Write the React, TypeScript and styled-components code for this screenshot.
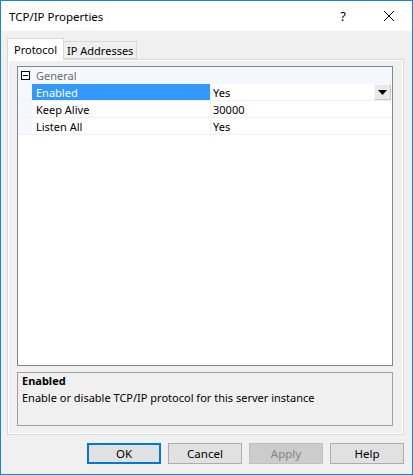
import React from "react";
import styled, { createGlobalStyle } from "styled-components";

const GlobalStyle = createGlobalStyle`
  html, body {
    margin: 0;
    padding: 0;
    background: #ffffff;
  }
  * {
    box-sizing: border-box;
  }
`;

const rows = [
  { name: "Enabled", value: "Yes", selected: true },
  { name: "Keep Alive", value: "30000", selected: false },
  { name: "Listen All", value: "Yes", selected: false },
];

const App: React.FC = () => {
  return (
    <>
      <GlobalStyle />
      <Window>
        <TitleBar>
          <Title>TCP/IP Properties</Title>
          <TitleButtons>
            <HelpGlyph>?</HelpGlyph>
            <CloseGlyph>
              <svg width="12" height="12" viewBox="0 0 12 12">
                <path d="M1 1 L11 11 M11 1 L1 11" stroke="#000" strokeWidth="1" fill="none" />
              </svg>
            </CloseGlyph>
          </TitleButtons>
        </TitleBar>

        <Body>
          <TabStrip>
            <Tab $active>Protocol</Tab>
            <Tab>IP Addresses</Tab>
          </TabStrip>

          <TabPanel>
            <Grid>
              <CategoryRow>
                <Margin>
                  <Expander />
                </Margin>
                <CategoryLabel>General</CategoryLabel>
              </CategoryRow>
              {rows.map((r) => (
                <PropRow key={r.name}>
                  <Margin />
                  <NameCell $selected={r.selected}>{r.name}</NameCell>
                  <ValueCell>
                    <span>{r.value}</span>
                    {r.selected && (
                      <DropButton>
                        <svg width="9" height="5" viewBox="0 0 9 5">
                          <path d="M0 0 H9 L4.5 5 Z" fill="#000" />
                        </svg>
                      </DropButton>
                    )}
                  </ValueCell>
                </PropRow>
              ))}
            </Grid>

            <Description>
              <DescTitle>Enabled</DescTitle>
              <DescText>Enable or disable TCP/IP protocol for this server instance</DescText>
            </Description>
          </TabPanel>

          <ButtonRow>
            <DialogButton $default>OK</DialogButton>
            <DialogButton>Cancel</DialogButton>
            <DialogButton disabled>Apply</DialogButton>
            <DialogButton>Help</DialogButton>
          </ButtonRow>
        </Body>
      </Window>
    </>
  );
};

const Window = styled.div`
  width: 413px;
  height: 475px;
  border: 1px solid #1883d7;
  background: #f0f0f0;
  display: flex;
  flex-direction: column;
  font-family: "Noto Sans", "Open Sans", sans-serif;
  font-size: 11px;
  color: #000;
`;

const TitleBar = styled.div`
  height: 30px;
  background: #ffffff;
  display: flex;
  align-items: center;
  justify-content: space-between;
  padding-left: 8px;
`;

const Title = styled.span`
  font-size: 11.5px;
  color: #000;
`;

const TitleButtons = styled.div`
  display: flex;
  align-items: center;
  height: 100%;
`;

const HelpGlyph = styled.span`
  width: 30px;
  text-align: center;
  font-size: 13px;
  margin-right: 8px;
`;

const CloseGlyph = styled.span`
  width: 46px;
  height: 100%;
  display: flex;
  align-items: center;
  justify-content: center;
`;

const Body = styled.div`
  flex: 1;
  display: flex;
  flex-direction: column;
  padding: 7px 8px 0 6px;
`;

const TabStrip = styled.div`
  display: flex;
  align-items: flex-end;
  height: 21px;
  position: relative;
  z-index: 1;
`;

const Tab = styled.div<{ $active?: boolean }>`
  height: ${(p) => (p.$active ? "22px" : "18px")};
  padding: 0 ${(p) => (p.$active ? "6px" : "3px")};
  margin-bottom: ${(p) => (p.$active ? "-1px" : "0")};
  border: 1px solid #d9d9d9;
  border-bottom: ${(p) => (p.$active ? "none" : "1px solid #d9d9d9")};
  border-left: ${(p) => (p.$active ? "1px solid #d9d9d9" : "none")};
  background: ${(p) => (p.$active ? "#ffffff" : "#f0f0f0")};
  display: flex;
  align-items: center;
  padding-top: ${(p) => (p.$active ? "0" : "1px")};
  white-space: nowrap;
`;

const TabPanel = styled.div`
  height: 376px;
  border: 1px solid #d9d9d9;
  box-shadow: inset 1px 1px 0 #ffffff, inset -1px -1px 0 #ffffff;
  padding: 6px 10px 8px 9px;
  display: flex;
  flex-direction: column;
  gap: 6px;
`;

const Grid = styled.div`
  height: 301px;
  background: #ffffff;
  border: 1px solid #828790;
  display: flex;
  flex-direction: column;
`;

const CategoryRow = styled.div`
  height: 17px;
  background: #f4f7fc;
  display: flex;
  align-items: center;
`;

const Margin = styled.div`
  width: 14px;
  height: 100%;
  background: #f4f7fc;
  display: flex;
  align-items: center;
  justify-content: center;
  flex-shrink: 0;
`;

const Expander = styled.div`
  width: 9px;
  height: 9px;
  border: 1px solid #000;
  background: #fff;
  position: relative;
  &::after {
    content: "";
    position: absolute;
    left: 1px;
    right: 1px;
    top: 3px;
    height: 1px;
    background: #000;
  }
`;

const CategoryLabel = styled.span`
  color: #6d6d6d;
  padding-left: 4px;
`;

const PropRow = styled.div`
  height: 17px;
  display: flex;
  border-bottom: 1px solid #f0f0f0;
`;

const NameCell = styled.div<{ $selected?: boolean }>`
  width: 179px;
  border-right: 1px solid #f0f0f0;
  padding-left: 4px;
  display: flex;
  align-items: center;
  background: ${(p) => (p.$selected ? "#3399ff" : "#ffffff")};
  color: ${(p) => (p.$selected ? "#ffffff" : "#000000")};
`;

const ValueCell = styled.div`
  flex: 1;
  display: flex;
  align-items: center;
  justify-content: space-between;
  padding-left: 2px;
  padding-right: 1px;
`;

const DropButton = styled.div`
  width: 17px;
  height: 16px;
  background: #e9e9e9;
  border: 1px solid #c8c8c8;
  border-top-color: #f8f8f8;
  border-left-color: #f8f8f8;
  display: flex;
  align-items: center;
  justify-content: center;
`;

const Description = styled.div`
  height: 54px;
  border: 1px solid #a0a0a0;
  background: #f0f0f0;
  padding: 0 4px;
  display: flex;
  flex-direction: column;
  gap: 2px;
  line-height: 15px;
`;

const DescTitle = styled.span`
  font-weight: bold;
`;

const DescText = styled.span``;

const ButtonRow = styled.div`
  display: flex;
  justify-content: flex-end;
  gap: 7px;
  padding-top: 8px;
  padding-right: 0;
`;

const DialogButton = styled.button<{ $default?: boolean }>`
  width: 74px;
  height: 21px;
  font-family: inherit;
  font-size: 11.5px;
  padding: 0;
  background: ${(p) => (p.disabled ? "#cccccc" : "#e1e1e1")};
  border: ${(p) => (p.$default ? "2px solid #0078d7" : p.disabled ? "1px solid #bfbfbf" : "1px solid #adadad")};
  color: ${(p) => (p.disabled ? "#838383" : "#000")};
`;

export default App;
